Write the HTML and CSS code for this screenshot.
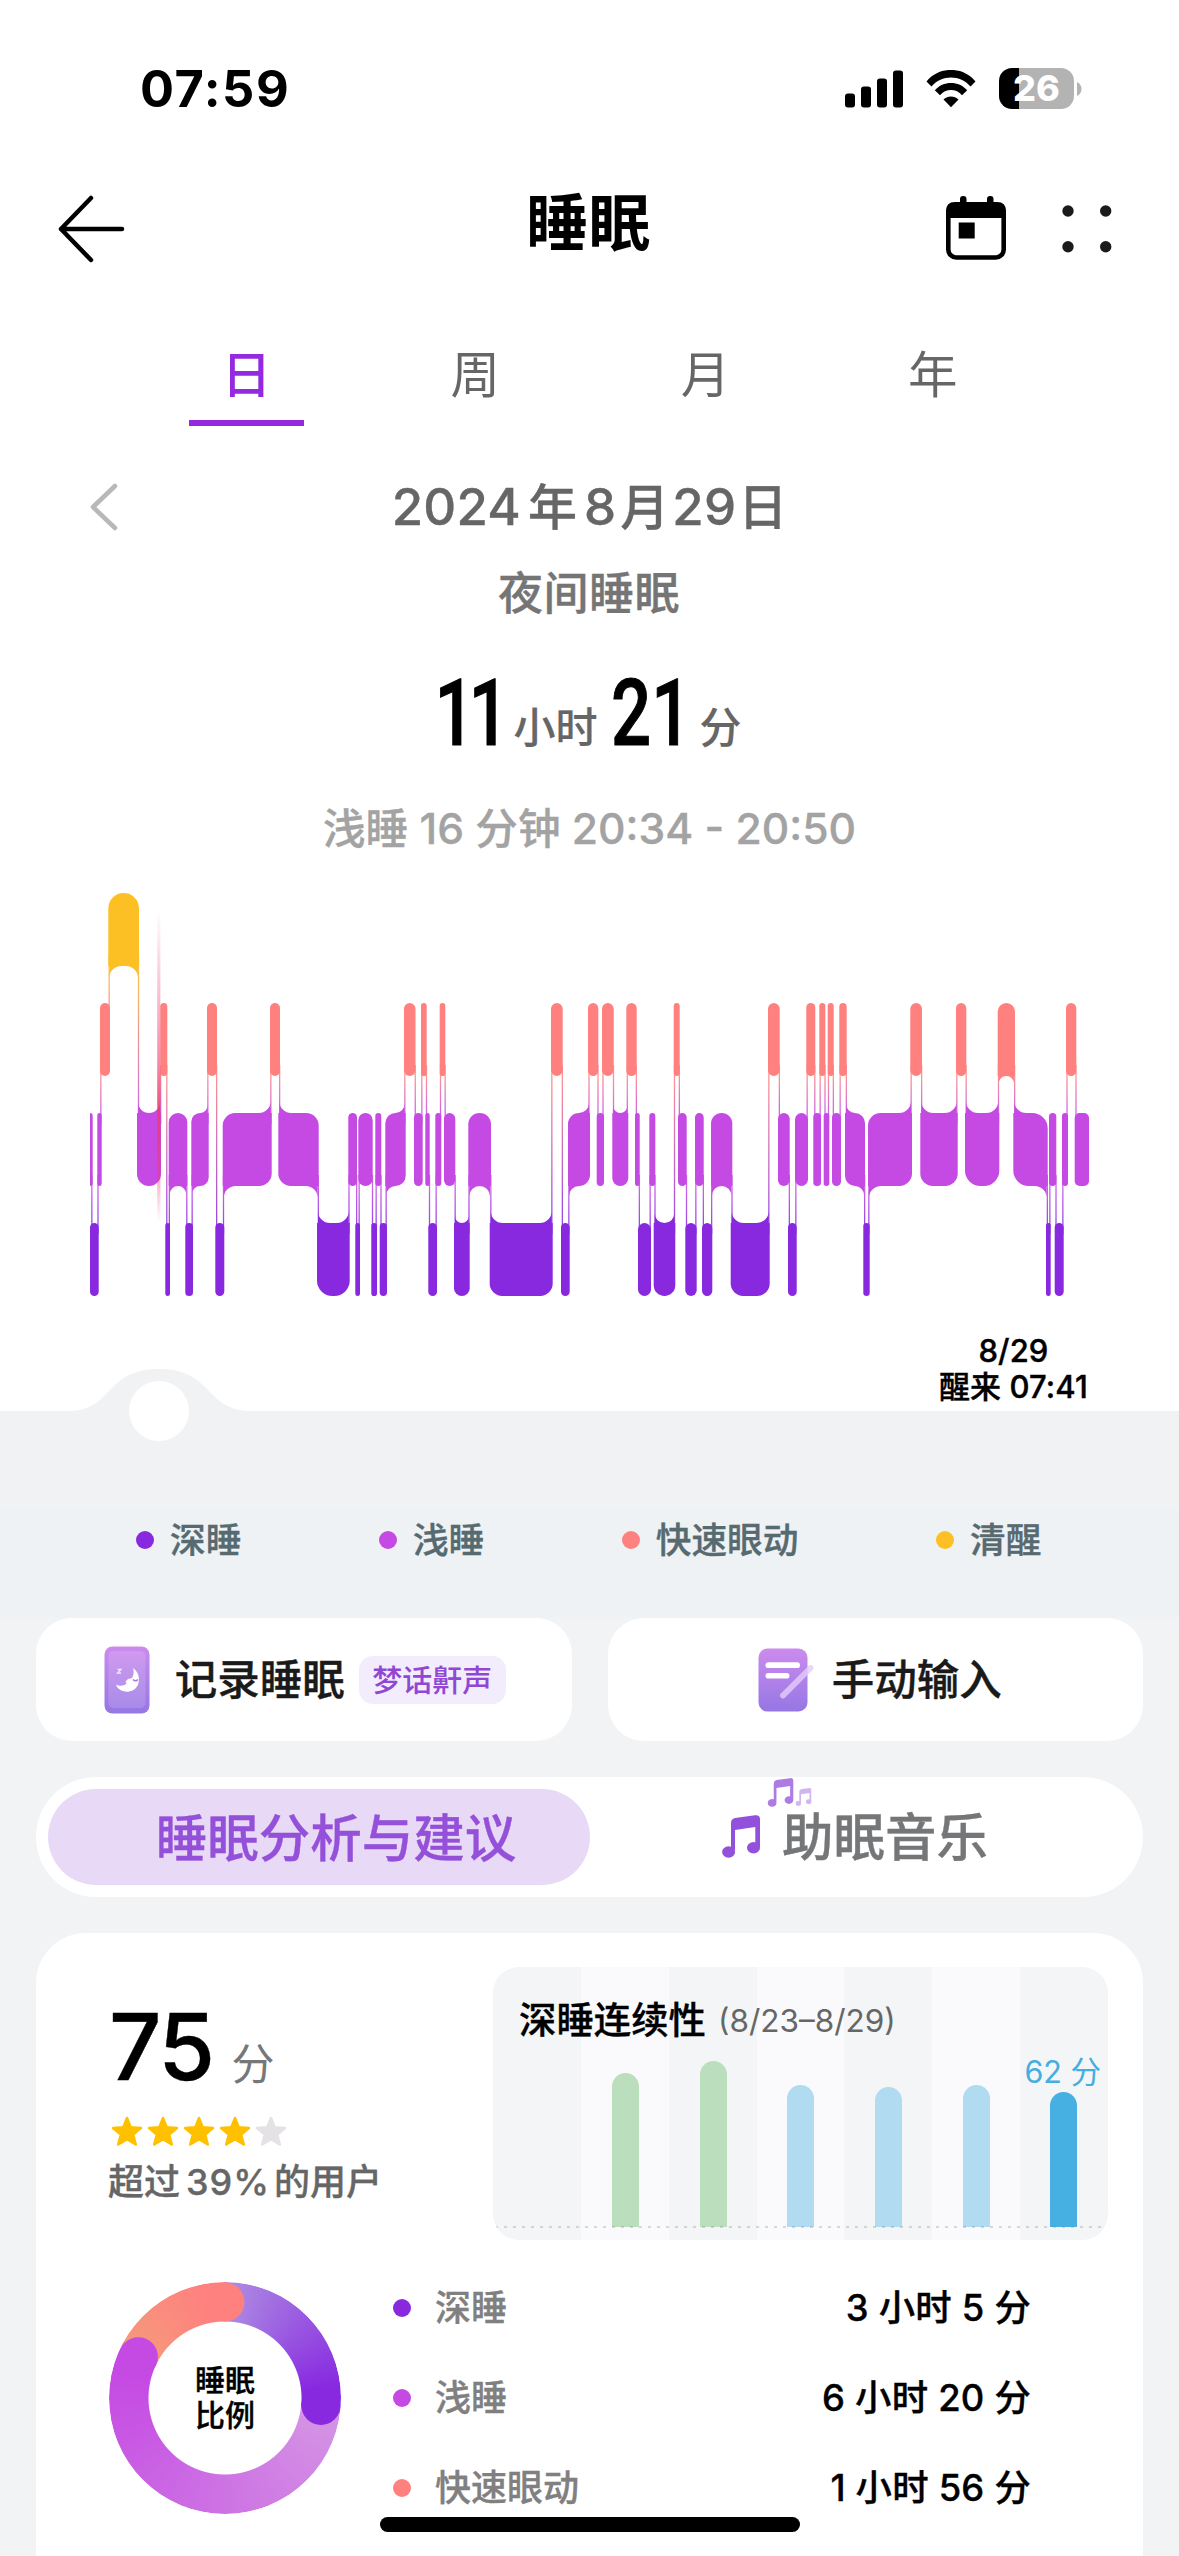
FILE: index.html
```html
<!DOCTYPE html>
<html lang="zh-CN">
<head>
<meta charset="utf-8">
<title>睡眠</title>
<link rel="stylesheet" href="styles.css">
</head>
<body>
<main class="screen">
  <header class="status">
    <span class="clock">07:59</span>
    <div class="status-icons">
      <svg class="signal" width="58" height="38" viewBox="0 0 58 38"><rect x="0" y="23.5" width="10" height="14" rx="3"/><rect x="16" y="16.5" width="10" height="21" rx="3"/><rect x="32" y="8.500" width="10" height="29" rx="3"/><rect x="48" y=".5" width="10" height="37" rx="3"/></svg>
      <svg class="wifi" width="52" height="38" viewBox="0 0 52 38"><path d="M1.500 12.500C14-3 38-3 50.500 12.500L45.500 17.500C35.500 5.500 16.500 5.500 6.500 17.500Z" transform="translate(0 -1)"/><path d="M9.800 21.300C18 11.500 34 11.500 42.200 21.300L37 26.300C31.500 19.200 20.500 19.200 15 26.300Z" transform="translate(0 -1)"/><path d="M18.500 29.500C22.500 25.500 29.500 25.500 33.500 29.500L26 37.200Z"/></svg>
      <div class="battery"><div class="battery-body"><span>26</span></div><svg width="5" height="14" viewBox="0 0 5 14"><path d="M0 0C6 2.500 6 11.500 0 14Z" fill="#b3b3b3"/></svg></div>
    </div>
  </header>

  <nav class="nav">
    <svg width="68" height="70" viewBox="0 0 68 70" fill="none" stroke="#000" stroke-width="4.500" stroke-linecap="round" stroke-linejoin="round"><path d="M34 4L4 35L34 66M4 35H65"/></svg>
    <h1>睡眠</h1>
    <div class="nav-actions">
      <svg width="60" height="66" viewBox="0 0 60 66"><rect x="2.300" y="8.500" width="55.400" height="53" rx="8" fill="#fff" stroke="#000" stroke-width="4.600"/><path d="M0 22V15Q0 6 9 6H51Q60 6 60 15V22Z"/><rect x="14" y="0" width="6.500" height="12" rx="3"/><rect x="41" y="0" width="6.500" height="12" rx="3"/><rect x="12.700" y="26.500" width="16" height="16"/></svg>
      <svg width="50" height="48" viewBox="0 0 50 48" fill="#1b1b1b"><circle cx="6" cy="6" r="5.700"/><circle cx="43.700" cy="6" r="5.700"/><circle cx="6" cy="41.700" r="5.700"/><circle cx="43.700" cy="41.700" r="5.700"/></svg>
    </div>
  </nav>

  <div class="tabs">
    <div class="tab active"><span>日</span></div>
    <div class="tab"><span>周</span></div>
    <div class="tab"><span>月</span></div>
    <div class="tab"><span>年</span></div>
  </div>

  <section class="summary">
    <div class="date-row">
      <svg width="30" height="50" viewBox="0 0 30 50" fill="none" stroke="#b8b8b8" stroke-width="4.500" stroke-linecap="round" stroke-linejoin="round"><path d="M27 3L5 24L27 45"/></svg>
      <div class="date"><b>2024</b><span>年</span><b>8</b><span>月</span><b>29</b><span>日</span></div>
    </div>
    <div class="kind">夜间睡眠</div>
    <div class="total"><b class="hours">11</b><i>小时</i><b class="minutes">21</b><i>分</i></div>
    <div class="selected">浅睡 16 分钟 20:34 - 20:50</div>
  </section>

  <svg class="hypnogram" width="1179" height="655" viewBox="0 855 1179 655">
    <defs>
      <linearGradient id="cursor" x1="0" y1="0" x2="0" y2="1"><stop offset="0" stop-color="#f0386b" stop-opacity="0"/><stop offset=".5" stop-color="#f0386b" stop-opacity=".6"/><stop offset=".62" stop-color="#f0386b" stop-opacity=".85"/><stop offset=".82" stop-color="#f0386b" stop-opacity=".5"/><stop offset="1" stop-color="#f0386b" stop-opacity="0"/></linearGradient>
    </defs>
    <g id="stages"></g>
    <rect x="157.200" y="910" width="3.200" height="312" fill="url(#cursor)"/>
    <path d="M0 1411H68C114 1411 104 1369 159 1369S204 1411 252 1411H1179V1510H0Z" fill="#f1f2f4"/>
    <circle cx="159" cy="1411" r="30" fill="#fff"/>
    <g class="axis-label"><text x="1013.500" y="1362">8/29</text><text x="1013.500" y="1398">醒来 07:41</text></g>
  </svg>

  <div class="legend">
    <span><i class="dot deep"></i>深睡</span>
    <span><i class="dot light"></i>浅睡</span>
    <span><i class="dot rem"></i>快速眼动</span>
    <span><i class="dot awake"></i>清醒</span>
  </div>

  <svg width="0" height="0" class="defs">
    <defs>
      <linearGradient id="lilac" x1="0" y1="0" x2="0" y2="1"><stop offset="0" stop-color="#cc8bee"/><stop offset="1" stop-color="#9577e4"/></linearGradient>
      <symbol id="note" viewBox="0 0 38 43"><path d="M9 35V8Q9 4 13 3L33 .2Q38 -.4 38 4V32H33.300V12L13 15V35Z"/><ellipse cx="6.600" cy="37" rx="6.500" ry="5.700"/><ellipse cx="31.500" cy="32.800" rx="6.500" ry="5.700"/></symbol>
    </defs>
  </svg>

  <div class="actions">
    <div class="action">
      <svg width="46" height="68" viewBox="0 0 46 68"><rect x=".5" y=".5" width="45" height="67" rx="8" fill="url(#lilac)"/><rect x="4.500" y="5" width="37" height="57" rx="5" fill="#fff" opacity=".14"/><path d="M29 22C38 28 37 44 25 45.500C19 46.500 13 43 12 38.500C15 40.500 20 40 22.500 37.500L21.500 35.500L24 33L28 32C30 29 30 25 29 22Z" fill="#fff"/><path d="M29 33.500Q31.500 36 34 33.500" stroke="#a278e2" stroke-width="1.600" fill="none"/><path d="M13.500 23.500H17L13.500 27H17" stroke="#f3e4fd" stroke-width="1.300" fill="none"/></svg>
      <span class="record">记录睡眠</span><span class="tag">梦话鼾声</span>
    </div>
    <div class="action second">
      <svg width="56" height="64" viewBox="0 0 56 64"><rect x=".5" y=".5" width="49" height="63" rx="9" fill="url(#lilac)"/><rect x="7.500" y="14.300" width="34.500" height="5.800" rx="2.900" fill="#fff"/><rect x="7.500" y="25" width="24" height="5.600" rx="2.800" fill="#fff"/><path d="M25 47.500L52.500 20" stroke="#e5cdfa" stroke-width="6" stroke-linecap="round" opacity=".8"/></svg>
      <span class="manual">手动输入</span>
    </div>
  </div>

  <div class="switch">
    <div class="switch-item on">睡眠分析与建议</div>
    <div class="switch-item off">
      <svg class="note" width="39" height="44"><use href="#note" width="38" height="43"/></svg>助眠音乐
      <svg class="sparkle" width="46" height="32" viewBox="0 0 46 32"><use href="#note" x="0" y="1" width="27" height="29" opacity=".75"/><use href="#note" x="28.500" y="11" width="16" height="18" opacity=".42"/></svg>
    </div>
  </div>

  <section class="card">
    <div class="card-top">
      <div class="score">
        <div class="score-value"><b>75</b><span>分</span></div>
        <svg class="stars" width="180" height="34" viewBox="0 0 180 34" stroke-linejoin="round" stroke-width="2.500">
          <defs><path id="star" d="M16 3L19.700 12.300L30 13L22.200 19.600L24.800 29.500L16 24.200L7.200 29.500L9.800 19.600L2 13L12.300 12.300Z"/></defs>
          <g fill="#ffc000" stroke="#ffc000"><use href="#star"/><use href="#star" x="36"/><use href="#star" x="72"/><use href="#star" x="108"/></g><use href="#star" x="144" fill="#e4e2e4" stroke="#e4e2e4"/>
        </svg>
        <div class="beat"><span>超过</span><span>39%</span><span>的用户</span></div>
      </div>
      <div class="trend">
        <div class="trend-title"><b>深睡连续性</b><span>(8/23–8/29)</span></div>
        <div class="col"></div>
        <div class="col"><i class="bar green" style="height:154px"></i></div>
        <div class="col"><i class="bar green" style="height:166px"></i></div>
        <div class="col"><i class="bar blue" style="height:142px"></i></div>
        <div class="col"><i class="bar blue" style="height:140px"></i></div>
        <div class="col"><i class="bar blue" style="height:142px"></i></div>
        <div class="col"><span class="value">62 分</span><i class="bar now" style="height:135px"></i></div>
        <svg class="baseline" width="615" height="2"><path d="M2 1H610" stroke="#808890" stroke-opacity=".6" stroke-width="1.200" stroke-dasharray="3 6"/></svg>
      </div>
    </div>
    <div class="ratio">
      <div class="donut">
        <div class="ring"></div>
        <svg class="caps" width="232" height="232" viewBox="0 0 232 232"><circle cx="211.900" cy="123.500" r="19.500" fill="#8829e0"/><circle cx="29.400" cy="74.700" r="19.500" fill="#c54ae3"/><circle cx="116" cy="20" r="19.500" fill="#fe8180"/></svg>
        <div class="donut-label">睡眠<br>比例</div>
      </div>
      <div class="stages">
        <div class="stage"><i class="dot deep"></i><span>深睡</span><b>3 小时 5 分</b></div>
        <div class="stage"><i class="dot light"></i><span>浅睡</span><b>6 小时 20 分</b></div>
        <div class="stage"><i class="dot rem"></i><span>快速眼动</span><b>1 小时 56 分</b></div>
      </div>
    </div>
  </section>
  <div class="home"></div>
</main>
<script src="script.js"></script>
</body>
</html>
```
FILE: styles.css
```css
* { box-sizing: border-box; }
body { margin: 0; background: #f1f3f5; }
h1, b, i { font-weight: 500; font-style: normal; margin: 0; }
svg { display: block; flex: none; }
.screen {
  position: relative;
  width: 1179px;
  height: 2556px;
  overflow: hidden;
  display: flex;
  flex-direction: column;
  font-family: Inter, "Noto Sans CJK SC", sans-serif;
  font-weight: 500;
  color: #000;
  white-space: nowrap;
  background: linear-gradient(#fff 1411px, #f1f3f5 1411px);
}
.screen > * { flex: none; }
.date, .kind, .selected, .legend, .record, .manual, .switch, .beat,
.trend-title b, .donut-label, .stage { -webkit-text-stroke: .35px currentColor; }

.status { height: 177px; padding: 0 97px 0 140px; display: flex; justify-content: space-between; align-items: center; }
.clock { font-size: 50.500px; font-weight: 700; line-height: 60px; letter-spacing: 1.500px; }
.status-icons { display: flex; align-items: center; }
.wifi { margin: 0 22px; }
.battery { display: flex; align-items: center; gap: 3px; }
.battery-body {
  width: 75px; height: 41px; border-radius: 13px;
  background: linear-gradient(90deg, #000 20px, #b3b3b3 20px);
  color: #fff; font-size: 36px; font-weight: 800; line-height: 40px; text-align: center;
}

.nav { height: 104px; padding: 0 67px 0 57px; display: grid; grid-template-columns: 200px 1fr 200px; align-items: center; }
.nav h1 { font-size: 62px; font-weight: 700; line-height: 80px; text-align: center; padding-bottom: 10px; margin-left: 8px; letter-spacing: .5px; }
.nav-actions { display: flex; align-items: center; gap: 56px; justify-content: flex-end; }

.tabs { height: 145px; padding: 64px 132px 0; display: flex; }
.tab { flex: 1; display: flex; justify-content: center; font-size: 49.500px; font-weight: 400; line-height: 60px; color: #666; }
.tab span { width: 115px; height: 81px; text-align: center; }
.tab:nth-child(3) span { text-indent: 3px; }
.tab.active span { color: #9429e0; font-weight: 500; border-bottom: 6px solid #9429e0; }

.summary { height: 429px; padding-top: 51px; text-align: center; }
.date-row { display: grid; grid-template-columns: 88px 1fr 88px; align-items: center; height: 60px; }
.date-row svg { margin-left: 88px; }
.date { display: flex; justify-content: center; align-items: baseline; gap: 4px; font-size: 49px; line-height: 60px; color: #666; }
.date b { font-size: 51px; letter-spacing: .2px; }
.date b:first-child { margin-right: 3px; }
.date b:nth-child(3) { margin-left: 3px; }
.date b:nth-child(5) { margin: 0 -2px 0 -1px; }
.kind { margin: 30px 1px 0 0; line-height: 54px; font-size: 45px; color: #757575; letter-spacing: .5px; }
.total { margin: 43px 7px 0 0; height: 100px; display: flex; justify-content: center; align-items: baseline; color: #666; font-size: 42px; line-height: 100px; }
.total b { text-align: left; font-family: Roboto, sans-serif; font-size: 93px; line-height: 100px; color: #000; transform: scaleX(.76); transform-origin: 0 50%; -webkit-text-stroke: 1px #000; }
.total .hours { width: 66px; letter-spacing: -8px; text-indent: 6px; }
.total .minutes { width: 72px; margin-left: 13px; }
.total i { margin-left: 17px; position: relative; top: -2px; -webkit-text-stroke: .2px currentColor; }
.selected { margin-top: 38px; line-height: 54px; font-size: 42.600px; color: #a3a3a3; }

.hypnogram { display: block; }
.axis-label { font-size: 31px; font-weight: 500; text-anchor: middle; stroke: #000; stroke-width: .4px; letter-spacing: .1px; }

.legend { height: 107px; padding: 7px 0 0 136px; display: flex; align-items: flex-start; gap: 137.500px; background: #eef2f5; color: #566a70; font-size: 35.700px; line-height: 46px; }
.legend span { display: flex; align-items: center; gap: 16px; }
.dot { width: 18px; height: 18px; border-radius: 50%; flex: none; }
.deep { background: #8829e0; }
.light { background: #c54ae3; }
.rem { background: #fe8180; }
.awake { background: #fcc024; }
.defs { position: absolute; }

.actions { display: grid; grid-template-columns: 1fr 1fr; gap: 36px; padding: 1px 36px 0; }
.action { height: 123px; border-radius: 36px; background: #fff; display: flex; align-items: center; justify-content: center; font-size: 42.500px; line-height: 60px; color: #1a1a1a; padding-left: 2px; }
.action.second { padding-left: 9px; }
.record { margin-left: 25px; }
.manual { margin-left: 18px; }
.tag { margin-left: 14px; width: 147px; height: 48px; border-radius: 14px; background: #f3ecfc; color: #8f47d4; font-size: 30px; line-height: 48px; text-align: center; }

.switch { margin: 36px 36px 0; height: 120px; padding: 12px; border-radius: 60px; background: #fff; display: grid; grid-template-columns: 542px 1fr; font-size: 51.500px; line-height: 99px; }
.switch-item { height: 96px; }
.switch-item.on { border-radius: 48px; background: #e8daf7; color: #9450d8; text-align: center; padding-left: 34px; }
.switch-item.off { position: relative; display: flex; align-items: center; padding-left: 132px; gap: 21px; color: #757678; }
.note, .sparkle { fill: #9350da; }
.sparkle { position: absolute; left: 177px; top: -12px; }

.card { margin: 36px 36px 0; height: 700px; border-radius: 50px; background: #fff; padding: 34px 35px 0 73px; }
.card-top { display: flex; justify-content: space-between; height: 273px; }
.score-value { margin-top: 32px; height: 96px; display: flex; align-items: baseline; gap: 19px; }
.score-value b { font-size: 92px; line-height: 96px; letter-spacing: -2.500px; -webkit-text-stroke: .4px #000; }
.score-value span { font-size: 43px; font-weight: 400; color: #777; }
.stars { margin: 20px 0 0 2px; }
.beat { display: flex; font-size: 36px; line-height: 48px; margin-top: 9px; margin-left: -1px; color: #666; }
.beat span:nth-child(2) { margin: 0 4px 0 6px; letter-spacing: 1px; }

.trend { position: relative; width: 615px; height: 273px; border-radius: 26px; overflow: hidden; display: flex; background: #f4f5f7; }
.col { position: relative; flex: 1; display: flex; justify-content: center; align-items: flex-end; padding-bottom: 13px; }
.col:nth-of-type(odd) { background: #fafafc; }
.bar { width: 27px; border-radius: 14px 14px 0 0; }
.green { background: #bbdfbc; margin-left: 2px; }
.blue { background: #b1dbf0; }
.now { background: #47b0e2; margin-right: 2px; }
.value { position: absolute; right: 7px; top: 85px; font-size: 30.500px; line-height: 40px; font-weight: 400; color: #45aee0; }
.trend-title { position: absolute; z-index: 1; left: 26px; top: 30px; display: flex; align-items: center; gap: 12px; font-size: 37.400px; line-height: 48px; }
.trend-title span { font-size: 31.500px; font-weight: 400; color: #666; }
.baseline { position: absolute; left: 0; bottom: 12px; }

.ratio { margin-top: 42px; display: flex; gap: 52px; }
.donut { display: grid; place-items: center; width: 232px; height: 232px; }
.donut > * { grid-area: 1 / 1; }
.ring {
  width: 232px; height: 232px; border-radius: 50%;
  background: conic-gradient(#ab87e2 6deg, #8829e0 84deg 95deg, #d494e4 98deg, #c54ae3 283deg 295deg, #f6987a 300deg, #fe8180 348deg);
  -webkit-mask: radial-gradient(circle, transparent 76px, #000 77px);
  mask: radial-gradient(circle, transparent 76px, #000 77px);
}
.caps { z-index: 1; }
.donut-label { font-size: 30px; line-height: 35px; text-align: center; }
.stages { width: 638px; margin-top: -19px; }
.stage { display: flex; align-items: center; height: 90px; font-size: 36px; line-height: 50px; }
.stage span { margin-left: 24px; color: #808080; }
.stage b { margin-left: auto; font-size: 36.400px; letter-spacing: .2px; }
.home { position: absolute; left: 380px; top: 2517px; width: 420px; height: 15px; border-radius: 8px; background: #000; }
```
FILE: script.js
```js
// Sleep stages in time order: [stage, start x, end x]; A awake, R REM, L light, D deep.
const stages = [
  ["L",90,92.700],["D",90,98.700],["L",97.300,101.700],["R",100,110],["A",108.300,139],["L",137,161],["R",160.300,167.300],
  ["D",165.300,170],["L",168.700,187.300],["D",185.300,193],["L",191.300,208.700],["R",207,217],["D",215.300,224.300],
  ["L",222.700,271.700],["R",270,280],["L",278.300,318.700],["D",317,349.700],["L",348.300,357],["D",355.300,360],
  ["L",358.300,372.700],["D",371.300,377],["L",375.300,381.300],["D",379.700,387],["L",385.300,405.700],["R",404,415.500],
  ["L",414,422.700],["R",421,426.700],["L",425.300,429.700],["D",428.300,437],["L",435.300,441.300],["R",439.700,445.300],
  ["L",444,455.300],["D",454,469.700],["L",468.300,491],["D",489.700,552.700],["R",551,562.700],["D",561,569.700],
  ["L",568,590],["R",588,598.300],["L",596.700,604],["R",602,613.700],["L",612.300,628.300],["R",626.300,636.700],
  ["L",635,639.700],["D",638,651],["L",649.300,655.300],["D",653.700,675.300],["R",673.700,679.700],["L",678,686.700],
  ["D",685.300,696.700],["L",695,703.700],["D",702,712.300],["L",711,732.300],["D",730.700,769.700],["R",768,779.700],
  ["L",778,789.700],["D",788,796.700],["L",795,808],["R",806.300,815.300],["L",813.300,821],["R",819.300,825.300],
  ["L",823.700,829.300],["R",827.700,833.700],["L",832,841],["R",839.300,846.700],["L",845,865],["D",863.300,869.700],
  ["L",868,912],["R",910.300,922],["L",920.300,957.700],["R",956,966.300],["L",965,999.300],["R",997.700,1015],
  ["L",1013.300,1047.700],["D",1046,1050.700],["L",1049,1056.300],["D",1054.700,1063.700],["L",1062,1068],
  ["R",1066,1076.300],["L",1074.700,1089]
];
const top0 = { A: 893, R: 1003, L: 1113, D: 1223 };
const color = { A: "#fcc024", R: "#fe8180", L: "#c54ae3", D: "#8829e0" };
const H = 73;
let defs = "", shapes = "", links = "";

for (const a of "ARLD") for (const b of "ARLD") {
  if (top0[a] < top0[b]) {
    defs += `<linearGradient id="g${a}${b}" gradientUnits="userSpaceOnUse" x1="0" x2="0" y1="${top0[a] + H}" y2="${top0[b]}"><stop stop-color="${color[a]}"/><stop offset="1" stop-color="${color[b]}"/></linearGradient>`;
  }
}

stages.forEach(([s, x0, x1], i) => {
  const t = top0[s], b = t + H, w = x1 - x0, c = color[s];
  const prev = stages[i - 1], next = stages[i + 1];
  const r = !prev || !next ? Math.min(w, 5) : Math.min(w / 2, w < 36 ? 15.5 : 12.5);
  const wide = w > 15;
  // A wide block is square at the corners where a neighbour joins it.
  const flare = {
    tl: wide && prev && top0[prev[0]] < t, bl: wide && prev && top0[prev[0]] > t,
    tr: wide && next && top0[next[0]] < t, br: wide && next && top0[next[0]] > t
  };
  const q = k => flare[k] || (!prev && k[1] === "l") ? 0 : r;
  const [tl, tr, br, bl] = ["tl", "tr", "br", "bl"].map(q);
  const arc = (n, x, y) => `A${n} ${n} 0 0 1 ${x} ${y}`;
  shapes += `<path fill="${c}" d="M${x0 + tl} ${t}H${x1 - tr}${arc(tr, x1, t + tr)}V${b - br}${arc(br, x1 - br, b)}H${x0 + bl}${arc(bl, x0, b - bl)}V${t + tl}${arc(tl, x0 + tl, t)}Z"/>`;
  const f = Math.min(12, (w - 2) / 2);
  const xl = x0 + 1, xr = x1 - 1;
  const curve = (x, y, dx, dy) => `<path fill="${c}" d="M${x} ${y}V${y + dy * f}A${f} ${f} 0 0 ${dx * dy > 0 ? 1 : 0} ${x + dx * f} ${y}Z"/>`;
  if (flare.tl) shapes += curve(xl, t, 1, -1);
  if (flare.tr) shapes += curve(xr, t, -1, -1);
  if (flare.bl) shapes += curve(xl, b, 1, 1);
  if (flare.br) shapes += curve(xr, b, -1, 1);
  if (next) {
    const up = top0[s] < top0[next[0]] ? s : next[0];
    const lo = up === s ? next[0] : s;
    const x = (x1 + next[1]) / 2 + (up === s ? .5 : 0) - .65;
    const y = top0[up] + H - 11;
    links += `<rect x="${x}" y="${y}" width="1.300" height="${top0[lo] + 11 - y}" fill="url(#g${up}${lo})" opacity=".85"/>`;
  }
});
document.getElementById("stages").innerHTML = `<defs>${defs}</defs>${shapes}${links}`;
```
